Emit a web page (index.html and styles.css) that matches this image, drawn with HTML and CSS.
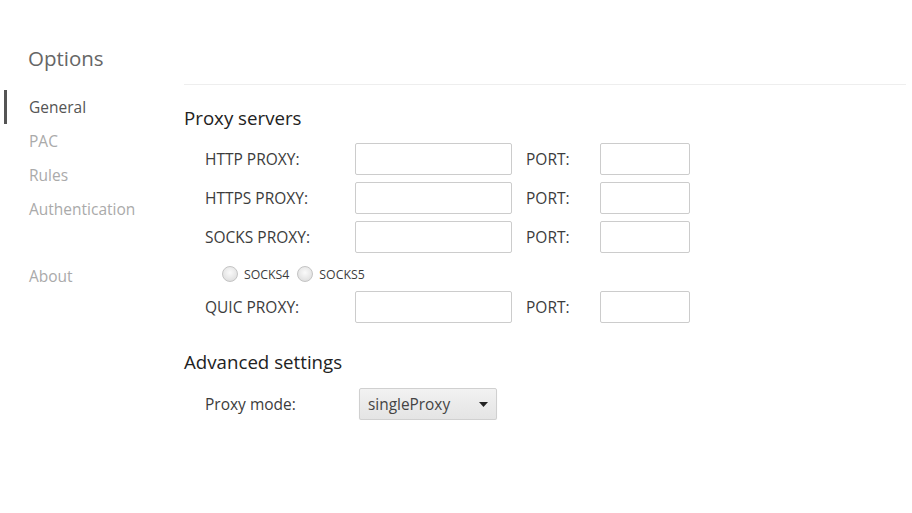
FILE: index.html
```html
<!DOCTYPE html>
<html>
<head>
<meta charset="utf-8">
<title>Options</title>
<link rel="stylesheet" href="styles.css">
</head>
<body>
<div class="page">
  <aside class="sidebar">
    <h1 class="brand">Options</h1>
    <ul class="nav">
      <li class="nav-item active">General</li>
      <li class="nav-item">PAC</li>
      <li class="nav-item">Rules</li>
      <li class="nav-item">Authentication</li>
      <li class="nav-item about">About</li>
    </ul>
  </aside>
  <main class="content">
    <div class="header"></div>
    <h2 class="section-title">Proxy servers</h2>
    <div class="row">
      <span class="label">HTTP PROXY:</span>
      <input class="host" type="text">
      <span class="port-label">PORT:</span>
      <input class="port" type="text">
    </div>
    <div class="row">
      <span class="label">HTTPS PROXY:</span>
      <input class="host" type="text">
      <span class="port-label">PORT:</span>
      <input class="port" type="text">
    </div>
    <div class="row">
      <span class="label">SOCKS PROXY:</span>
      <input class="host" type="text">
      <span class="port-label">PORT:</span>
      <input class="port" type="text">
    </div>
    <div class="radio-row">
      <label class="radio"><input type="radio" name="socks"><span>socks4</span></label>
      <label class="radio"><input type="radio" name="socks"><span>socks5</span></label>
    </div>
    <div class="row">
      <span class="label">QUIC PROXY:</span>
      <input class="host" type="text">
      <span class="port-label">PORT:</span>
      <input class="port" type="text">
    </div>
    <h2 class="section-title advanced">Advanced settings</h2>
    <div class="mode-row">
      <span class="mode-label">Proxy mode:</span>
      <div class="select">
        <span>singleProxy</span>
        <svg class="caret" width="9" height="5" viewBox="0 0 9 5"><path d="M0 0h9L4.5 5z" fill="#222"/></svg>
      </div>
    </div>
  </main>
</div>
</body>
</html>
```

FILE: styles.css
```css
html, body {
  margin: 0;
  padding: 0;
  background: #fff;
}
body {
  font-family: "Open Sans", "Noto Sans", sans-serif;
  color: #444;
}
.page {
  display: flex;
}
.sidebar {
  width: 184px;
  flex: none;
}
.brand {
  margin: 44px 0 0 28px;
  font-size: 20.5px;
  font-weight: 400;
  color: #666;
  line-height: 28px;
}
.nav {
  list-style: none;
  margin: 18px 0 0 0;
  padding: 0;
}
.nav-item {
  margin-left: 4px;
  border-left: 3px solid transparent;
  padding-left: 22px;
  height: 34px;
  line-height: 34px;
  font-size: 15.5px;
  color: #aaa;
}
.nav-item.active {
  color: #555;
  border-left-color: #555;
}
.nav-item.about {
  margin-top: 33px;
}
.content {
  flex: 1;
  padding-right: 6px;
}
.header {
  height: 84px;
  border-bottom: 1px solid #eee;
}
.section-title {
  margin: 21px 0 13px 0;
  font-size: 18.7px;
  font-weight: 400;
  color: #222;
  line-height: 24px;
}
.row {
  display: flex;
  align-items: center;
  height: 32px;
  margin: 0 0 7px 21px;
  font-size: 15.5px;
  color: #3c3c3c;
}
.label {
  width: 150px;
}
input[type="text"] {
  box-sizing: border-box;
  height: 32px;
  border: 1px solid #ccc;
  border-radius: 2px;
  margin: 0;
  padding: 0 6px;
  background: #fff;
}
.host {
  width: 157px;
}
.port-label {
  margin-left: 14px;
  width: 74px;
}
.port {
  width: 90px;
}
.radio-row {
  display: flex;
  align-items: center;
  height: 28px;
  margin: 0 0 3px 38px;
}
.radio {
  display: flex;
  align-items: center;
  font-size: 12.3px;
  text-transform: uppercase;
  color: #3c3c3c;
  margin-right: 8px;
}
.radio input {
  appearance: none;
  -webkit-appearance: none;
  width: 16px;
  height: 16px;
  margin: 0 6px 0 0;
  border-radius: 50%;
  border: 1px solid #c4c4c4;
  box-sizing: border-box;
  background: radial-gradient(circle at 50% 40%, #fafafa 0%, #e6e6e6 60%, #d6d6d6 100%);
}
.advanced {
  margin-top: 27px;
  margin-bottom: 14px;
}
.mode-row {
  display: flex;
  align-items: center;
  margin-left: 21px;
  font-size: 15.5px;
  color: #3c3c3c;
}
.mode-label {
  width: 154px;
}
.select {
  box-sizing: border-box;
  width: 138px;
  height: 32px;
  border: 1px solid #d0d0d0;
  border-radius: 2px;
  background: linear-gradient(#f2f2f2, #e4e4e4);
  display: flex;
  align-items: center;
  justify-content: space-between;
  padding: 0 8px 0 8px;
  font-size: 15.4px;
  color: #444;
  box-shadow: 0 1px 1px rgba(0,0,0,0.08);
}
.caret {
  display: block;
}
```
